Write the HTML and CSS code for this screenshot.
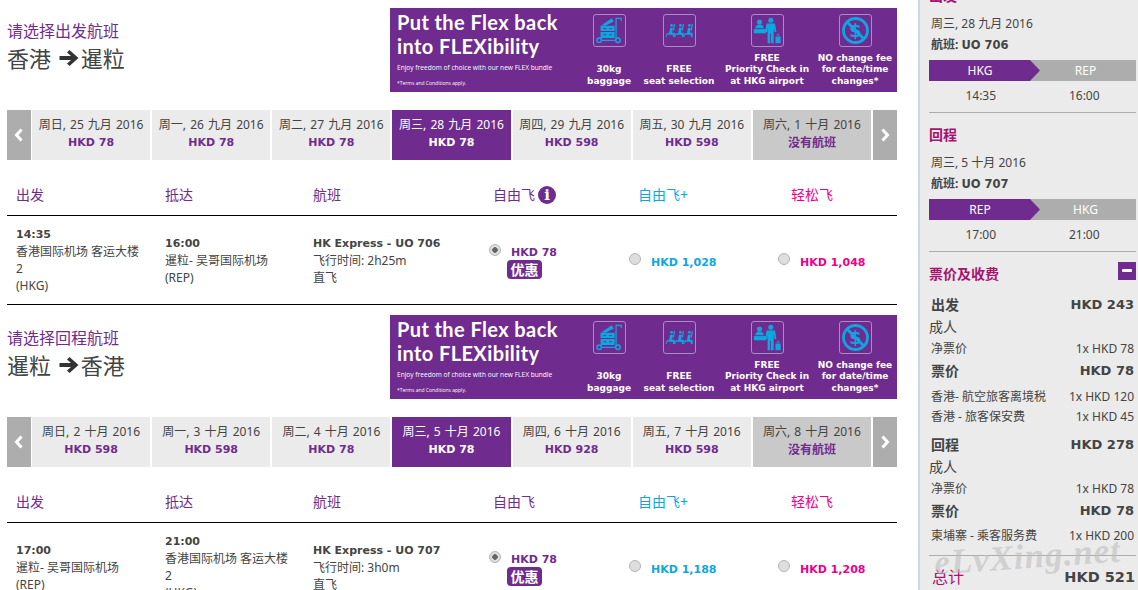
FILE: index.html
```html
<!DOCTYPE html>
<html lang="zh-CN">
<head>
  <meta charset="UTF-8" />
  <title>选择航班</title>
  <link rel="stylesheet" href="styles.css">
</head>
<body>
  <!-- Shared banner icons -->
  <svg class="defs" xmlns="http://www.w3.org/2000/svg">
    <symbol id="icon-bag" viewBox="0 0 33 33">
      <g fill="none" stroke="currentColor">
        <circle cx="5.500" cy="27" r="2.400" stroke-width="1.600"/>
        <circle cx="25.500" cy="27" r="2.400" stroke-width="1.600"/>
        <path d="M8 27h15M23.500 26V3.500h5.500v3" stroke-width="1.300"/>
      </g>
      <g fill="currentColor">
        <path d="M7 11.500h15v5.500H7zM7 18h15v6.500H7z"/>
        <path d="M8 11l11-7.500 2 3.500-9 4.500z"/>
      </g>
      <path d="M10 14.500h3M16 14.500h3M10 21h3M16 21h3" stroke="#702b8f"/>
    </symbol>
    <symbol id="icon-seat" viewBox="0 0 33 33">
      <g fill="currentColor">
        <circle cx="8" cy="11" r="1.500"/>
        <circle cx="17.500" cy="11" r="1.500"/>
        <circle cx="27" cy="11" r="1.500"/>
        <path d="M6.500 13.500h3l-.8 5.500h2.800v4.500H9.500v-2.500H3.500l-1 2.500H1.500l1.500-4h2.500z"/>
        <path d="M16 13.500h3l-.8 5.500H21v4.500h-2v-2.500h-6l-1 2.500h-1l1.500-4H15z"/>
        <path d="M25.500 13.500h3l-.8 5.500h2.800v4.500h-2v-2.500h-6l-1 2.500h-1l1.500-4H24.500z"/>
        <path d="M10.500 9.500h1.300l-1 7H9.500zM20 9.500h1.300l-1 7H19zM29.500 9.500h1.300l-1 7h-1.300z"/>
      </g>
    </symbol>
    <symbol id="icon-desk" viewBox="0 0 33 33">
      <g fill="currentColor">
        <circle cx="8" cy="7.500" r="2.700"/>
        <path d="M3.500 14c0-2.500 2-4 4.500-4s4.500 1.500 4.500 4z"/>
        <path d="M2 15h13v4.500H2z"/>
        <circle cx="20" cy="5.500" r="2.700"/>
        <path d="M15.500 9h9l1.500 9h-2l-.8-5-.2 17h-2.800v-10h-.8v10h-2.800V13l-.6 5h-2z"/>
        <path d="M25 23h5.500v7H25z"/>
      </g>
      <path d="M26.800 23v-2.500h2v2.500" fill="none" stroke="currentColor" stroke-width=".8"/>
    </symbol>
    <symbol id="icon-fee" viewBox="0 0 33 33">
      <circle cx="16.500" cy="16.500" r="12.800" fill="none" stroke="currentColor" stroke-width="3"/>
      <path d="M7.500 7.500l18 18" stroke="currentColor" stroke-width="3"/>
      <text x="16.500" y="23.500" text-anchor="middle" fill="currentColor" class="fee-glyph">$</text>
    </symbol>
  </svg>

  <div class="main">

    <!-- Outbound -->
    <section class="leg">
      <div class="leg-top">
        <div class="leg-title">
          <div class="pick">请选择出发航班</div>
          <div class="route">香港 <svg class="route-arrow" viewBox="0 0 20 18"><path d="M10.500 1L19.500 9l-9 8-2.500-2.500 4-3.500H.5V7H12L8 3.500z"/></svg>暹粒</div>
        </div>
        <div class="banner">
          <div class="promo">
            <div class="promo-title">Put the Flex back<br>into FLEXibility</div>
            <div class="promo-sub">Enjoy freedom of choice with our new FLEX bundle</div>
            <div class="promo-terms">*Terms and Conditions apply.</div>
          </div>
          <div class="perk perk-bag"><span class="perk-box"><svg><use href="#icon-bag"/></svg></span><span class="perk-text">30kg<br>baggage</span></div>
          <div class="perk perk-seat"><span class="perk-box"><svg><use href="#icon-seat"/></svg></span><span class="perk-text">FREE<br>seat selection</span></div>
          <div class="perk perk-desk"><span class="perk-box"><svg><use href="#icon-desk"/></svg></span><span class="perk-text">FREE<br>Priority Check in<br>at HKG airport</span></div>
          <div class="perk perk-fee"><span class="perk-box"><svg><use href="#icon-fee"/></svg></span><span class="perk-text">NO change fee<br>for date/time<br>changes*</span></div>
        </div>
      </div>

      <div class="dates">
        <div class="nav nav-prev"><svg viewBox="0 0 10 14"><path d="M7.500 1.500L2.500 7l5 5.500" /></svg></div>
        <div class="day"><span>周日, 25 九月 2016</span><b>HKD 78</b></div>
        <div class="day"><span>周一, 26 九月 2016</span><b>HKD 78</b></div>
        <div class="day"><span>周二, 27 九月 2016</span><b>HKD 78</b></div>
        <div class="day selected"><span>周三, 28 九月 2016</span><b>HKD 78</b></div>
        <div class="day"><span>周四, 29 九月 2016</span><b>HKD 598</b></div>
        <div class="day"><span>周五, 30 九月 2016</span><b>HKD 598</b></div>
        <div class="day none"><span>周六, 1 十月 2016</span><em>没有航班</em></div>
        <div class="nav"><svg viewBox="0 0 10 14"><path d="M2.500 1.500L7.500 7l-5 5.500" /></svg></div>
      </div>

      <div class="flights-head">
        <div>出发</div>
        <div>抵达</div>
        <div>航班</div>
        <div class="fare-a">自由飞 <span class="info">i</span></div>
        <div class="fare-b">自由飞+</div>
        <div class="fare-c">轻松飞</div>
      </div>
      <div class="flight">
        <div class="stop"><b>14:35</b>香港国际机场 客运大楼<br>2<br>(HKG)</div>
        <div class="stop"><b>16:00</b>暹粒- 吴哥国际机场<br>(REP)</div>
        <div class="stop"><b>HK Express - UO 706</b>飞行时间: 2h25m<br>直飞</div>
        <div class="fare fare-a">
          <span class="radio checked"></span>
          <div><b>HKD 78</b><span class="deal">优惠</span></div>
        </div>
        <div class="fare fare-b"><span class="radio"></span><b>HKD 1,028</b></div>
        <div class="fare fare-c"><span class="radio"></span><b>HKD 1,048</b></div>
      </div>
    </section>

    <!-- Return -->
    <section class="leg">
      <div class="leg-top">
        <div class="leg-title">
          <div class="pick">请选择回程航班</div>
          <div class="route">暹粒 <svg class="route-arrow" viewBox="0 0 20 18"><path d="M10.500 1L19.500 9l-9 8-2.500-2.500 4-3.500H.5V7H12L8 3.500z"/></svg>香港</div>
        </div>
        <div class="banner">
          <div class="promo">
            <div class="promo-title">Put the Flex back<br>into FLEXibility</div>
            <div class="promo-sub">Enjoy freedom of choice with our new FLEX bundle</div>
            <div class="promo-terms">*Terms and Conditions apply.</div>
          </div>
          <div class="perk perk-bag"><span class="perk-box"><svg><use href="#icon-bag"/></svg></span><span class="perk-text">30kg<br>baggage</span></div>
          <div class="perk perk-seat"><span class="perk-box"><svg><use href="#icon-seat"/></svg></span><span class="perk-text">FREE<br>seat selection</span></div>
          <div class="perk perk-desk"><span class="perk-box"><svg><use href="#icon-desk"/></svg></span><span class="perk-text">FREE<br>Priority Check in<br>at HKG airport</span></div>
          <div class="perk perk-fee"><span class="perk-box"><svg><use href="#icon-fee"/></svg></span><span class="perk-text">NO change fee<br>for date/time<br>changes*</span></div>
        </div>
      </div>

      <div class="dates">
        <div class="nav nav-prev"><svg viewBox="0 0 10 14"><path d="M7.500 1.500L2.500 7l5 5.500" /></svg></div>
        <div class="day"><span>周日, 2 十月 2016</span><b>HKD 598</b></div>
        <div class="day"><span>周一, 3 十月 2016</span><b>HKD 598</b></div>
        <div class="day"><span>周二, 4 十月 2016</span><b>HKD 78</b></div>
        <div class="day selected"><span>周三, 5 十月 2016</span><b>HKD 78</b></div>
        <div class="day"><span>周四, 6 十月 2016</span><b>HKD 928</b></div>
        <div class="day"><span>周五, 7 十月 2016</span><b>HKD 598</b></div>
        <div class="day none"><span>周六, 8 十月 2016</span><em>没有航班</em></div>
        <div class="nav"><svg viewBox="0 0 10 14"><path d="M2.500 1.500L7.500 7l-5 5.500" /></svg></div>
      </div>

      <div class="flights-head">
        <div>出发</div>
        <div>抵达</div>
        <div>航班</div>
        <div class="fare-a">自由飞</div>
        <div class="fare-b">自由飞+</div>
        <div class="fare-c">轻松飞</div>
      </div>
      <div class="flight">
        <div class="stop"><b>17:00</b>暹粒- 吴哥国际机场<br>(REP)</div>
        <div class="stop"><b>21:00</b>香港国际机场 客运大楼<br>2<br>(HKG)</div>
        <div class="stop"><b>HK Express - UO 707</b>飞行时间: 3h0m<br>直飞</div>
        <div class="fare fare-a">
          <span class="radio checked"></span>
          <div><b>HKD 78</b><span class="deal">优惠</span></div>
        </div>
        <div class="fare fare-b"><span class="radio"></span><b>HKD 1,188</b></div>
        <div class="fare fare-c"><span class="radio"></span><b>HKD 1,208</b></div>
      </div>
    </section>
  </div>

  <aside class="side">
    <div class="trip">
      <h3>出发</h3>
      <div class="trip-date">周三, 28 九月 2016</div>
      <div class="trip-no"><b>航班:</b> <strong>UO 706</strong></div>
      <div class="path"><span class="from">HKG</span><span class="to">REP</span></div>
      <div class="times"><span>14:35</span><span>16:00</span></div>
    </div>
    <div class="trip">
      <h3>回程</h3>
      <div class="trip-date">周三, 5 十月 2016</div>
      <div class="trip-no"><b>航班:</b> <strong>UO 707</strong></div>
      <div class="path"><span class="from">REP</span><span class="to">HKG</span></div>
      <div class="times"><span>17:00</span><span>21:00</span></div>
    </div>

    <div class="fees-head">
      <h3>票价及收费</h3>
      <span class="collapse"></span>
    </div>

    <div class="line major first"><b>出发</b><strong>HKD 243</strong></div>
    <div class="line adult">成人</div>
    <div class="line net"><span>净票价</span><span>1x HKD 78</span></div>
    <div class="line major"><b>票价</b><strong>HKD 78</strong></div>
    <div class="line fee first-fee"><span>香港- 航空旅客离境税</span><span>1x HKD 120</span></div>
    <div class="line fee"><span>香港 - 旅客保安费</span><span>1x HKD 45</span></div>
    <div class="line major next"><b>回程</b><strong>HKD 278</strong></div>
    <div class="line adult">成人</div>
    <div class="line net"><span>净票价</span><span>1x HKD 78</span></div>
    <div class="line major"><b>票价</b><strong>HKD 78</strong></div>
    <div class="line fee last-fee"><span>柬埔寨 - 乘客服务费</span><span>1x HKD 200</span></div>

    <div class="total"><span>总计</span><strong>HKD 521</strong></div>
    <div class="watermark">eLvXing.net</div>
  </aside>
</body>
</html>
```

FILE: styles.css
```css
* {
  box-sizing: border-box;
  margin: 0;
  padding: 0;
}
html, body {
  height: 590px;
  overflow: hidden;
}
body {
  display: flex;
  background-color: #fff;
  color: #444;
  font-family: 'Noto Sans', 'Noto Sans CJK SC', sans-serif;
  font-size: 12px;
  line-height: 17px;
}
.defs {
  display: none;
}
.main {
  width: 890px;
  margin-left: 7px;
  flex: none;
}

/* Leg header */
.leg {
  padding-top: 8px;
  margin-bottom: 2px;
}
.leg-top {
  display: flex;
  justify-content: space-between;
  height: 84px;
}
.leg-title {
  padding-top: 13px;
}
.pick {
  color: #702b8f;
  font-size: 16px;
  line-height: 20px;
}
.route {
  display: flex;
  align-items: center;
  margin-top: 2px;
  color: #444;
  font-size: 22px;
  line-height: 30px;
  white-space: pre;
}
.route-arrow {
  width: 20px;
  height: 18px;
  margin: 0 2px;
  fill: #333;
}

/* Banner */
.banner {
  display: flex;
  width: 507px;
  padding: 6px 0 5px 7px;
  background-color: #702b8f;
  color: #fff;
}
.promo {
  width: 184px;
  flex: none;
}
.promo-title {
  margin-top: -4px;
  font-family: 'Lato', sans-serif;
  font-size: 20px;
  font-weight: 700;
  line-height: 24px;
  letter-spacing: 0.4px;
  white-space: nowrap;
}
.promo-sub {
  margin-top: 5px;
  font-family: 'Open Sans', sans-serif;
  font-size: 6.6px;
  line-height: 10px;
  white-space: nowrap;
}
.promo-terms {
  margin-top: 6px;
  font-family: 'Open Sans', sans-serif;
  font-size: 5px;
  line-height: 9px;
}
.perk {
  display: flex;
  flex-direction: column;
  align-items: center;
  flex: none;
}
.perk-bag { width: 56px; }
.perk-seat { width: 84px; }
.perk-desk { width: 92px; }
.perk-fee { width: 84px; }
.perk-box {
  width: 33px;
  height: 33px;
  border: 1px solid #a88cc4;
  border-radius: 3px;
  color: #0da7e0;
  flex: none;
}
.perk-box svg {
  display: block;
  width: 31px;
  height: 31px;
}
.fee-glyph {
  font-family: 'DejaVu Sans', sans-serif;
  font-size: 19px;
  font-weight: 700;
}
.perk-text {
  margin-top: auto;
  font-family: 'DejaVu Sans', sans-serif;
  font-size: 9px;
  font-weight: 700;
  line-height: 11.4px;
  text-align: center;
  white-space: nowrap;
}

/* Date strip */
.dates {
  display: flex;
  gap: 2px;
  height: 50px;
  margin-top: 18px;
}
.nav {
  display: flex;
  align-items: center;
  justify-content: center;
  width: 24px;
  flex: none;
  background-color: #adadad;
}
.nav-prev {
  margin-right: -1px;
}
.nav svg {
  width: 10px;
  height: 14px;
  fill: none;
  stroke: #fff;
  stroke-width: 3;
}
.day {
  display: flex;
  flex-direction: column;
  align-items: center;
  justify-content: center;
  flex: 1;
  padding-bottom: 2px;
  background-color: #ebebeb;
  line-height: 18px;
  white-space: nowrap;
}
.day span {
  word-spacing: 1px;
}
.day b {
  color: #702b8f;
  font-family: 'DejaVu Sans', sans-serif;
  font-size: 11px;
}
.day.selected {
  background-color: #702b8f;
  color: #fff;
}
.day.selected b {
  color: #fff;
}
.day.none {
  background-color: #c9c9c9;
}
.day.none em {
  color: #702b8f;
  font-style: normal;
  font-weight: 700;
}

/* Flight table */
.flights-head,
.flight {
  display: grid;
  grid-template-columns: 149px 148px 180px 143px 149px 121px;
  border-bottom: 1px solid #000;
}
.flights-head {
  align-items: center;
  height: 56px;
  padding-top: 14px;
  color: #702b8f;
  font-size: 14px;
}
.flights-head > div {
  padding-left: 9px;
}
.flights-head .fare-a {
  display: flex;
  align-items: center;
  gap: 3px;
}
.flights-head .fare-b {
  padding-left: 11px;
  color: #0da7e0;
}
.flights-head .fare-c {
  padding-left: 15px;
  color: #ec008c;
}
.info {
  width: 18px;
  height: 18px;
  border-radius: 50%;
  background-color: #702b8f;
  color: #fff;
  font-family: 'DejaVu Serif', serif;
  font-size: 15px;
  font-weight: 700;
  line-height: 18px;
  text-align: center;
}
.flight {
  align-items: center;
  height: 89px;
}
.stop {
  padding-left: 9px;
  white-space: nowrap;
}
.stop b {
  display: block;
  font-family: 'DejaVu Sans', sans-serif;
  font-size: 11px;
}
.fare {
  display: flex;
  align-items: flex-start;
  gap: 10px;
  font-family: 'DejaVu Sans', sans-serif;
  font-size: 11px;
}
.fare.fare-a { padding-left: 5px; color: #702b8f; }
.fare.fare-b { padding: 3px 0 0 2px; color: #0da7e0; }
.fare.fare-c { padding: 3px 0 0 2px; color: #ec008c; }
.radio {
  width: 12px;
  height: 12px;
  margin-top: 1px;
  border: 1px solid #b5b5b5;
  border-radius: 50%;
  background-color: #dedede;
  flex: none;
}
.radio.checked {
  margin-top: 3px;
  background: radial-gradient(circle, #666 0 2.500px, #dedede 3px);
}
.fare > b {
  margin-top: 2px;
}
.fare > div {
  margin-top: 2px;
}
.fare > div b {
  display: block;
  padding-top: 3px;
  line-height: 14px;
}
.deal {
  display: block;
  width: 35px;
  height: 19px;
  margin-left: -4px;
  border-radius: 4px;
  background-color: #702b8f;
  color: #fff;
  font-family: 'Noto Sans CJK SC', sans-serif;
  font-size: 14px;
  font-weight: 700;
  line-height: 19px;
  text-align: center;
}

/* Sidebar */
.side {
  position: relative;
  width: 220px;
  height: 590px;
  margin-left: 21px;
  padding: 0 2px 0 9px;
  flex: none;
  overflow: hidden;
  border-left: 2px solid #ccd6e6;
  background-color: #ebebeb;
}
.side h3 {
  color: #a6126e;
  font-size: 14px;
  line-height: 20px;
}
.trip {
  height: 139px;
  padding-top: 12px;
  border-bottom: 1px solid #adadad;
}
.trip:first-child {
  margin-top: -26px;
}
.trip-date {
  margin-top: 8px;
  padding-left: 2px;
  line-height: 20px;
}
.trip-no {
  height: 20px;
  padding-left: 2px;
  line-height: 22px;
}
.trip-no strong {
  font-family: 'DejaVu Sans', sans-serif;
  font-size: 11.500px;
}
.path {
  display: flex;
  height: 21px;
  margin-top: 6px;
  background-color: #adadad;
  color: #fff;
  line-height: 21px;
  text-align: center;
}
.from {
  width: 111px;
  padding-right: 9px;
  flex: none;
  background-color: #702b8f;
  clip-path: polygon(0 0, 101px 0, 111px 50%, 101px 100%, 0 100%);
}
.to {
  flex: 1;
  padding-right: 5px;
}
.times {
  display: flex;
  height: 30px;
  line-height: 30px;
}
.times span {
  width: 104px;
  text-align: center;
}
.fees-head {
  display: flex;
  justify-content: space-between;
  align-items: flex-start;
  height: 30px;
  padding-top: 10px;
}
.fees-head h3 {
  margin-top: 2px;
}
.collapse {
  position: relative;
  width: 18px;
  height: 18px;
  background-color: #702b8f;
}
.collapse::before {
  content: '';
  position: absolute;
  left: 4px;
  top: 7px;
  width: 10px;
  height: 3px;
  border-radius: 1px;
  background-color: #fff;
}
.line {
  display: flex;
  justify-content: space-between;
  height: 20px;
  padding: 0 2px;
  line-height: 20px;
  white-space: nowrap;
}
.line b {
  font-size: 14px;
}
.line strong {
  font-family: 'DejaVu Sans', sans-serif;
  font-size: 13px;
}
.major { margin-top: 3px; }
.major.first { margin-top: 13px; }
.major.next { margin-top: 9px; }
.adult {
  margin-top: 2px;
  padding-left: 0;
  font-size: 14px;
}
.net {
  margin-top: 1px;
  line-height: 22px;
}
.fee {
  line-height: 22px;
}
.first-fee { margin-top: 5px; }
.last-fee { margin-top: 4px; }
.total {
  display: flex;
  justify-content: space-between;
  align-items: center;
  height: 44px;
  margin-top: 10px;
  padding: 0 1px 0 3px;
  border-top: 1px solid #adadad;
  color: #a6126e;
  font-size: 16px;
}
.total strong {
  color: #444;
  font-family: 'DejaVu Sans', sans-serif;
  font-size: 14.500px;
}
.watermark {
  position: absolute;
  left: 14px;
  top: 535px;
  color: rgba(190, 190, 190, 0.6);
  font-family: 'Liberation Serif', serif;
  font-size: 35px;
  font-style: italic;
  font-weight: 700;
  line-height: 44px;
  letter-spacing: 1px;
  transform: rotate(-4deg);
  white-space: nowrap;
}
```
